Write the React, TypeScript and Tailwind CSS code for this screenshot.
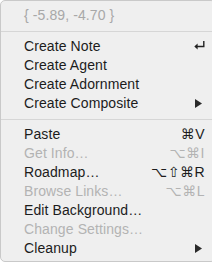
import React from "react";

type Item = {
  label: string;
  shortcut?: string;
  disabled?: boolean;
  submenu?: boolean;
  enter?: boolean;
};

const groups: Item[][] = [
  [
    { label: "Create Note", enter: true },
    { label: "Create Agent" },
    { label: "Create Adornment" },
    { label: "Create Composite", submenu: true },
  ],
  [
    { label: "Paste", shortcut: "⌘V" },
    { label: "Get Info…", shortcut: "⌥⌘I", disabled: true },
    { label: "Roadmap…", shortcut: "⌥⇧⌘R" },
    { label: "Browse Links…", shortcut: "⌥⌘L", disabled: true },
    { label: "Edit Background…" },
    { label: "Change Settings…", disabled: true },
    { label: "Cleanup", submenu: true },
  ],
];

function Separator() {
  return (
    <div className="flex h-[12px] items-center">
      <div className="h-px w-full bg-[#d6d6d6]" />
    </div>
  );
}

function EnterIcon() {
  return (
    <svg width="11" height="9" viewBox="0 0 11 9" className="text-[#222]">
      <path d="M9.8 0 V5.5 H3" fill="none" stroke="currentColor" strokeWidth="1.4" />
      <path d="M0.3 5.5 L3.6 2.6 V8.4 Z" fill="currentColor" />
    </svg>
  );
}

function SubmenuArrow() {
  return (
    <svg width="7" height="9" viewBox="0 0 7 9" className="text-[#2a2a2a]">
      <path d="M0 0 L7 4.5 L0 9 Z" fill="currentColor" />
    </svg>
  );
}

function Row({ item }: { item: Item }) {
  return (
    <div
      className={`flex h-[19px] items-center justify-between pl-[23px] pr-[10px] ${
        item.disabled ? "text-[#b3b3b3]" : "text-[#1c1c1c]"
      }`}
    >
      <span className="tracking-[0.1px]">{item.label}</span>
      {item.shortcut && <span className="tracking-[0.5px]">{item.shortcut}</span>}
      {item.submenu && (
        <span className="pr-[3px]">
          <SubmenuArrow />
        </span>
      )}
      {item.enter && (
        <span className="pb-[2px]">
          <EnterIcon />
        </span>
      )}
    </div>
  );
}

export default function App() {
  return (
    <div className="h-[263px] w-[212px] overflow-hidden bg-white">
      <div
        className="h-[262px] w-[216px] rounded-[5px] border border-[#c9c9c9] bg-[#efefef] pt-[5px] text-[14px]"
        style={{ fontFamily: '"Liberation Sans", "DejaVu Sans", sans-serif' }}
      >
        <div className="flex h-[19px] items-center pl-[23px] tracking-[0.1px] text-[#a8a8a8]">
          {"{ -5.89, -4.70 }"}
        </div>
        {groups.map((g, i) => (
          <div key={i}>
            <Separator />
            {g.map((item) => (
              <Row key={item.label} item={item} />
            ))}
          </div>
        ))}
      </div>
    </div>
  );
}
